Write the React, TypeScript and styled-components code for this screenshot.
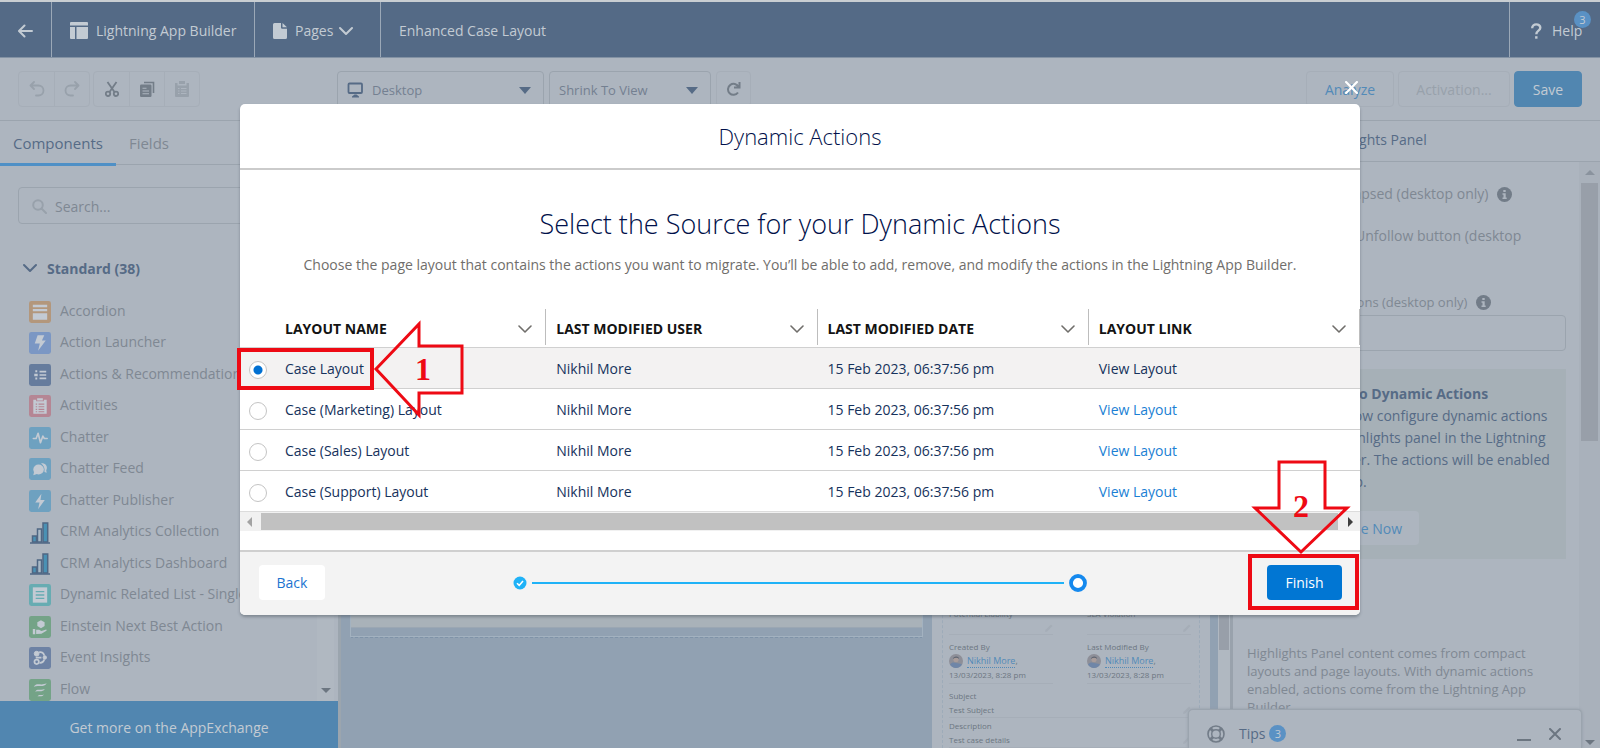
import React from 'react';
import styled, { createGlobalStyle } from 'styled-components';

const c = {
  bg: '#adb5bf',
  line: '#9ba4ae',
  faint: '#a6aeb8',
  navy: '#546a86',
  ink: '#566b86',
  text: '#7f8893',
  dim: '#98a1ab',
  pale: '#c3cbd3',
  blue: '#5186b0',
  link: '#528ab8',
  canvas: '#91a1b2',
  red: '#ee0a14',
};

const Global = createGlobalStyle`
  *, *::before, *::after { box-sizing: border-box; }
  body { margin: 0; background: ${c.bg}; }
  body, button, input, select { font-family: "Open Sans", "Noto Sans", sans-serif; font-size: 14px; }
  button { cursor: pointer; margin: 0; }
  svg { display: block; flex: none; }
  ul, h1, h2, h3, p, dl, dd { margin: 0; padding: 0; }
`;

const Page = styled.div`
  position: relative;
  display: flex;
  flex-direction: column;
  height: 100vh;
  overflow: hidden;
  background: ${c.bg};
  color: ${c.text};
  line-height: 20px;
`;

const TopBar = styled.header`
  display: flex;
  flex: none;
  height: 58px;
  border-top: 2px solid #c9ced2;
  border-bottom: 1px solid #8392a4;
  background: ${c.navy};
  color: ${c.pale};
`;

const BarCell = styled.div<{ $width?: number; $end?: boolean }>`
  position: relative;
  display: flex;
  align-items: center;
  gap: 8px;
  width: ${(p) => (p.$width ? `${p.$width}px` : 'auto')};
  padding: 2px 18px 0;
  border-right: ${(p) => (p.$width && !p.$end ? '1px solid #9ba8b7' : '0')};
  border-left: ${(p) => (p.$end ? '1px solid #9ba8b7' : '0')};
  margin-left: ${(p) => (p.$end ? 'auto' : '0')};
  white-space: nowrap;
`;

const BareButton = styled.button`
  display: flex;
  align-items: center;
  gap: 6px;
  padding: 0;
  border: 0;
  background: none;
  color: inherit;
`;

const Count = styled.span<{ $corner?: boolean }>`
  display: flex;
  align-items: center;
  justify-content: center;
  width: 17px;
  height: 17px;
  border-radius: 50%;
  background: #5a91c4;
  color: ${c.pale};
  font-size: 11px;
  line-height: 17px;
  ${(p) => p.$corner && 'position: absolute; right: 9px; top: 9px;'}
`;

const Toolbar = styled.div`
  display: flex;
  flex: none;
  align-items: flex-start;
  height: 63px;
  padding: 13px 18px 0;
  border-bottom: 1px solid ${c.line};
`;

const ButtonGroup = styled.div`
  display: flex;
  margin-right: 3px;
  border: 1px solid ${c.faint};
  border-radius: 4px;
`;

const IconButton = styled.button<{ $dim?: boolean; $framed?: boolean }>`
  display: flex;
  align-items: center;
  justify-content: center;
  width: 35px;
  height: ${(p) => (p.$framed ? 36 : 34)}px;
  padding: 0;
  border: ${(p) => (p.$framed ? `1px solid ${c.faint}` : '0')};
  border-radius: ${(p) => (p.$framed ? '4px' : '0')};
  background: none;
  color: ${(p) => (p.$dim ? c.dim : '#737d88')};
  & + & { border-left: 1px solid ${c.faint}; }
`;

const Pickers = styled.div`
  display: flex;
  gap: 5px;
  margin-left: 134px;
`;

const Picker = styled.label<{ $width: number }>`
  display: flex;
  align-items: center;
  gap: 8px;
  width: ${(p) => p.$width}px;
  height: 38px;
  padding: 0 12px 0 9px;
  border: 1px solid ${c.line};
  border-radius: 4px;
  color: ${c.ink};
`;

const PickerSelect = styled.select`
  flex: 1;
  min-width: 0;
  padding: 0;
  border: 0;
  appearance: none;
  background: none;
  color: #748091;
  font-size: 13px;
`;

const Actions = styled.div`
  display: flex;
  gap: 4px;
  margin-left: auto;
`;

const ActionButton = styled.button<{ $kind?: 'brand' | 'off'; $width: number }>`
  width: ${(p) => p.$width}px;
  height: 36px;
  padding: 1px 0 0;
  border: 1px solid ${(p) => (p.$kind === 'brand' ? c.blue : c.faint)};
  border-radius: 4px;
  background: ${(p) => (p.$kind === 'brand' ? c.blue : 'none')};
  color: ${(p) => (p.$kind === 'brand' ? c.pale : p.$kind === 'off' ? c.dim : c.link)};
`;

const Body = styled.div`
  display: flex;
  flex: 1;
  min-height: 0;
`;

const Sidebar = styled.aside`
  position: relative;
  display: flex;
  flex: none;
  flex-direction: column;
  width: 338px;
  overflow: hidden;
`;

const Tabs = styled.div`
  display: flex;
  flex: none;
  height: 44px;
  border-bottom: 1px solid ${c.line};
`;

const Tab = styled.button<{ $active?: boolean }>`
  height: 45px;
  padding: 1px 13px 0;
  border: 0;
  border-bottom: 3px solid ${(p) => (p.$active ? '#4f90c6' : 'transparent')};
  background: none;
  color: ${(p) => (p.$active ? c.ink : c.text)};
  font-size: 15px;
`;

const SearchBox = styled.label`
  display: flex;
  flex: none;
  align-items: center;
  gap: 8px;
  height: 37px;
  margin: 22px 18px 0;
  padding: 1px 13px 0;
  border: 1px solid ${c.line};
  border-radius: 4px;
`;

const SearchInput = styled.input`
  flex: 1;
  min-width: 0;
  padding: 0;
  border: 0;
  background: none;
  &::placeholder { color: ${c.text}; opacity: 1; }
`;

const SectionButton = styled.button`
  display: flex;
  align-items: center;
  gap: 10px;
  height: 20px;
  margin: 34px 0 18px;
  padding: 0 23px;
  border: 0;
  background: none;
  color: ${c.ink};
  font-weight: 700;
`;

const ComponentList = styled.ul`
  flex: 1;
  min-height: 0;
  margin-right: 20px;
  overflow: hidden;
  list-style: none;
`;

const ComponentItem = styled.li`
  display: flex;
  align-items: center;
  gap: 9px;
  height: 31px;
  padding-left: 29px;
  white-space: nowrap;
  &:nth-child(even) { height: 32px; }
`;

const ComponentName = styled.span`
  padding-bottom: 2px;
`;

const SidebarTrack = styled.div`
  position: absolute;
  right: 4px;
  top: 150px;
  bottom: 47px;
  display: flex;
  align-items: flex-end;
  justify-content: center;
  width: 17px;
  padding-bottom: 8px;
  background: #b0b8c1;
`;

const ExchangeLink = styled.a`
  display: flex;
  flex: none;
  align-items: center;
  justify-content: center;
  height: 47px;
  padding-top: 6px;
  background: ${c.blue};
  color: ${c.pale};
  text-decoration: none;
`;

const Canvas = styled.main`
  display: flex;
  flex: 1;
  min-width: 0;
  border-left: 3px solid #9ba5ae;
  background: ${c.canvas};
`;

const CanvasMain = styled.div`
  flex: 1;
  padding: 0 9px;
`;

const Dropzone = styled.div`
  height: 517px;
  border: 1px solid #a3b2c0;
  border-bottom: 1px dashed #7f93a8;
  box-shadow: inset 0 -1px 0 #a3b2c0;
`;

const Card = styled.div`
  height: 506px;
  border-bottom: 1px solid #9ba7b3;
  background: #a9b2b9;
`;

const RecordPane = styled.section`
  flex: none;
  width: 278px;
  padding: 0 10px;
  background: ${c.bg};
`;

const Record = styled.dl`
  display: grid;
  grid-template-columns: 104px 104px;
  column-gap: 34px;
  height: 100%;
  padding: 481px 0 0 6px;
  align-content: start;
  border: 1px dashed #9dabb9;
  border-width: 0 1px;
  color: #6c7681;
  font-size: 8px;
  line-height: 14px;
`;

const Field = styled.div<{ $wide?: boolean; $tight?: boolean; $height: number }>`
  grid-column: ${(p) => (p.$wide ? '1 / -1' : 'auto')};
  height: ${(p) => p.$height}px;
  padding-top: ${(p) => (p.$tight ? 1 : 5)}px;
  border-bottom: 1px solid ${c.faint};
  white-space: nowrap;
`;

const FieldValue = styled.dd`
  display: flex;
  align-items: center;
  justify-content: space-between;
  height: 14px;
`;

const Person = styled.dd`
  display: flex;
  align-items: center;
  gap: 4px;
  font-size: 9px;
`;

const PersonLink = styled.a`
  border-bottom: 1px dotted ${c.link};
  color: ${c.link};
  line-height: 11px;
  text-decoration: none;
`;

const CanvasTrack = styled.div`
  flex: none;
  width: 12px;
  margin-left: 8px;
  padding: 0 1px;
  background: #b0b8c1;
`;

const CanvasThumb = styled.div`
  height: 529px;
  background: #989fa9;
`;

const Inspector = styled.aside`
  display: flex;
  flex: none;
  flex-direction: column;
  width: 370px;
  border-left: 3px solid #99a2ac;
`;

const InspectorTitle = styled.h2`
  flex: none;
  height: 41px;
  padding: 9px 0 0 42px;
  border-bottom: 1px solid ${c.line};
  color: ${c.ink};
  font-size: 14px;
  font-weight: 400;
`;

const InspectorScroll = styled.div`
  display: flex;
  flex: 1;
  min-height: 0;
`;

const InspectorBody = styled.div`
  flex: 1;
  padding: 22px 14px 0;
  overflow: hidden;
  white-space: nowrap;
`;

const CheckRow = styled.label<{ $gap: number }>`
  display: flex;
  align-items: center;
  gap: 9px;
  margin-bottom: ${(p) => p.$gap}px;
  & input { width: 18px; height: 18px; margin: 0; }
`;

const FieldLabel = styled.label`
  display: flex;
  align-items: center;
  gap: 9px;
  height: 20px;
  margin: 46px 0 3px;
  font-size: 13px;
`;

const ActionCount = styled.input`
  display: block;
  width: 319px;
  height: 36px;
  border: 1px solid ${c.line};
  border-radius: 4px;
  background: none;
`;

const Notice = styled.section`
  width: 319px;
  height: 190px;
  margin-top: 18px;
  padding: 14px 0 0 43px;
  background: #a6b0b7;
  color: ${c.ink};
  line-height: 22px;
`;

const NoticeTitle = styled.h3`
  font-size: 14px;
  font-weight: 700;
`;

const UpgradeButton = styled.button`
  width: 129px;
  height: 34px;
  margin-top: 18px;
  padding: 0 17px 0 0;
  border: 0;
  border-radius: 4px;
  background: ${c.bg};
  color: ${c.link};
  text-align: right;
`;

const Hint = styled.p`
  margin-top: 85px;
  font-size: 13px;
  line-height: 18px;
`;

const InspectorTrack = styled.div`
  display: flex;
  flex-direction: column;
  align-items: center;
  flex: none;
  width: 21px;
  padding: 8px 2px 3px;
  background: #a9b1bb;
`;

const InspectorThumb = styled.div`
  width: 17px;
  height: 258px;
  margin: 8px 0 auto;
  background: #989fa9;
`;

const TipsDock = styled.section`
  position: absolute;
  right: 18px;
  bottom: 0;
  display: flex;
  align-items: center;
  width: 394px;
  height: 39px;
  padding: 9px 20px 0 18px;
  border: 1px solid ${c.line};
  border-bottom: 0;
  border-radius: 5px 5px 0 0;
  background: ${c.bg};
  box-shadow: 0 0 3px #8f99a4;
  color: ${c.ink};
`;

const TipsTitle = styled.h2`
  margin: 0 4px 0 14px;
  font-size: 14px;
  font-weight: 400;
`;

const DockButtons = styled.div`
  display: flex;
  gap: 18px;
  margin-left: auto;
  color: #6c7681;
`;

const Overlay = styled.div`
  position: absolute;
  inset: 0;
  display: flex;
  align-items: flex-start;
  justify-content: center;
  padding-top: 104px;
`;

const Dialog = styled.section`
  position: relative;
  width: 70%;
  border-radius: 5px;
  background: #fff;
  box-shadow: 0 2px 3px rgba(60, 70, 80, 0.4);
  color: #16325c;
`;

const CloseButton = styled.button`
  position: absolute;
  right: 2px;
  top: -23px;
  padding: 0;
  border: 0;
  background: none;
  color: #fff;
`;

const DialogHeader = styled.header`
  height: 66px;
  border-bottom: 2px solid #cbcbcb;
  text-align: center;
`;

const DialogTitle = styled.h1`
  color: #00104a;
  font-size: 22px;
  font-weight: 300;
  line-height: 64px;
`;

const Heading = styled.h2`
  padding-top: 36px;
  color: #00104a;
  font-size: 27px;
  font-weight: 300;
  line-height: 36px;
  text-align: center;
`;

const Lead = styled.p`
  padding: 12px 0 33px;
  color: #706e6b;
  line-height: 22px;
  text-align: center;
`;

const LayoutTable = styled.table`
  width: 100%;
  border-collapse: collapse;
  table-layout: fixed;
`;

const SelectHead = styled.th`
  width: 35px;
  padding: 0;
`;

const HeadCell = styled.th`
  height: 38px;
  padding: 2px 10px 0;
  background: linear-gradient(#bdbdbd, #bdbdbd) right top / 1px 36px no-repeat;
  color: #131313;
  font-size: 14px;
  font-weight: 700;
  text-align: left;
`;

const HeadInner = styled.div`
  display: flex;
  align-items: center;
  justify-content: space-between;
  padding-right: 4px;
  & svg { color: #706e6b; }
`;

const Row = styled.tr<{ $selected?: boolean }>`
  height: 41px;
  border-top: 1px solid #d0d0d0;
  background: ${(p) => (p.$selected ? '#f3f2f2' : '#fff')};
`;

const Cell = styled.td`
  padding: 2px 10px 0;
  line-height: 20px;
`;

const RadioCell = styled.td`
  padding: 5px 0 0 9px;
`;

const Radio = styled.input`
  display: block;
  width: 18px;
  height: 18px;
  margin: 0;
  border: 1px solid #c4c4c4;
  border-radius: 50%;
  appearance: none;
  background: #fff;
  &:checked { background: radial-gradient(circle, #0070d2 4px, #fff 5px); }
`;

const LayoutLink = styled.a<{ $plain?: boolean }>`
  color: ${(p) => (p.$plain ? '#16325c' : '#1b7fd4')};
  text-decoration: none;
`;

const ScrollRow = styled.div`
  display: flex;
  align-items: center;
  height: 20px;
  margin-bottom: 19px;
  padding: 0 7px;
  border-top: 1px solid #dcdcdc;
  background: #f1f1f1;
`;

const ScrollThumb = styled.div`
  flex: 1;
  height: 17px;
  margin: 0 10px 0 9px;
  background: #c1c1c1;
`;

const DialogFooter = styled.footer`
  display: flex;
  align-items: center;
  justify-content: space-between;
  height: 65px;
  padding: 0 18px 2px 19px;
  border-top: 2px solid #cfcfcf;
  border-radius: 0 0 5px 5px;
  background: #f3f3f3;
`;

const FooterButton = styled.button<{ $brand?: boolean }>`
  width: ${(p) => (p.$brand ? 75 : 66)}px;
  height: 35px;
  padding: 0;
  border: 0;
  border-radius: 4px;
  background: ${(p) => (p.$brand ? '#0176d3' : '#fff')};
  color: ${(p) => (p.$brand ? '#fff' : '#1b73d0')};
`;

const Progress = styled.div`
  display: flex;
  align-items: center;
  gap: 5px;
  width: 53%;
  margin-left: 8px;
`;

const ProgressLine = styled.div`
  flex: 1;
  height: 2px;
  background: #1fb2f7;
`;

const Callout = styled.svg<{ $side: 'left' | 'right' }>`
  position: absolute;
  pointer-events: none;
  ${(p) => (p.$side === 'left' ? 'left: -4px; top: 215px;' : 'right: 0; bottom: 0;')}
`;

const CalloutNumber = styled.text`
  fill: ${c.red};
  font-family: "Liberation Serif", serif;
  font-size: 32px;
  font-weight: 700;
`;

const Chevron = ({ size = 14, width = 2 }: { size?: number; width?: number }) => (
  <svg width={size} height={size} viewBox="0 0 14 14" fill="none" stroke="currentColor" strokeWidth={width} strokeLinecap="round" strokeLinejoin="round">
    <path d="M1 4l6 6 6-6" />
  </svg>
);

const Triangle = ({ dir = 'down', w = 10, color = 'currentColor' }: { dir?: 'down' | 'up' | 'left' | 'right'; w?: number; color?: string }) => {
  const long = w;
  const short = Math.ceil(w / 2) + (w > 10 ? 1 : 0);
  const flat = dir === 'down' || dir === 'up';
  const W = flat ? long : short;
  const H = flat ? short : long;
  const d = {
    down: `M0 0H${W}L${W / 2} ${H}z`,
    up: `M0 ${H}H${W}L${W / 2} 0z`,
    left: `M${W} 0V${H}L0 ${H / 2}z`,
    right: `M0 0V${H}L${W} ${H / 2}z`,
  }[dir];
  return <svg width={W} height={H} viewBox={`0 0 ${W} ${H}`}><path fill={color} d={d} /></svg>;
};

const Cross = ({ size }: { size: number }) => (
  <svg width={size} height={size} viewBox="0 0 12 12" stroke="currentColor" strokeWidth="2" strokeLinecap="round">
    <path d="M1 1l10 10M11 1L1 11" />
  </svg>
);

const Pencil = () => (
  <svg width="8" height="8" viewBox="0 0 8 8"><path fill="#a5adb7" d="M0 8l.6-2.200L6 .5l1.500 1.500L2.200 7.400z" /></svg>
);

const Info = () => (
  <svg width="15" height="15" viewBox="0 0 15 15">
    <circle cx="7.500" cy="7.500" r="7.500" fill="#727c88" />
    <path fill={c.bg} d="M6.300 3h2.400v2H6.300zM5.500 6.200h3.200v4.300h1V12H5.500v-1.500h1V7.700h-1z" />
  </svg>
);

const Avatar = () => (
  <svg width="14" height="14" viewBox="0 0 14 14">
    <circle cx="7" cy="7" r="7" fill="#8e8f98" />
    <path fill="#6f86a8" d="M1 10.500c2-2.500 4-2 6-1.500s4 0 6 1.500A7 7 0 0 1 1 10.500z" />
    <circle cx="7" cy="5.500" r="2.600" fill="#a99c9a" />
    <path fill="#5e6470" d="M4 5c0-3 6-3.500 6 0-1.500-1.600-4-1.600-6 0z" />
  </svg>
);

const g = '#c3cad3';

const glyphs: Record<string, [string, React.ReactNode]> = {
  accordion: ['#b3977c', <path key="g" fill={g} d="M4 4h15v2.500H4zM4 8.300h15v2.500H4zM4 12.800h15v6.700H4z" />],
  launcher: ['#7b97c4', <path key="g" fill={g} d="M9 3.500h7l-2.500 5.500h4L9.500 19.500l1.800-7.500H6z" />],
  actions: ['#667c9d', <path key="g" fill={g} d="M11 7h7v1.800h-7zM11 10.600h7v1.800h-7zM11 14.200h7V16h-7zM6.600 6.500h2v2h-2zM5.500 10.200h3.600v2.600H5.500zM6.600 14.200h2v2h-2z" />],
  activities: ['#b58694', <g key="g"><path fill={g} d="M4.500 5h3v1.500h8V5h3v14.500h-14zM8.500 3.500h6v2.200h-6z" /><path stroke="#b58694" strokeWidth="1.200" d="M7 9.500h1.500M10 9.500h6M7 12.300h1.500M10 12.300h6M7 15h1.500M10 15h6M7 17.500h1.500M10 17.500h6" /></g>],
  chatter: ['#6ea1c0', <path key="g" fill="none" stroke={g} strokeWidth="1.700" strokeLinejoin="round" strokeLinecap="round" d="M4.500 12h3l2-5.500 2.500 10 2.500-7 1.500 2.500h3" />],
  feed: ['#6ea1c0', <g key="g"><path fill={g} d="M12.500 5.500c4-.5 6.500 2 6.200 5-.2 1.500-.7 2.300-.7 2.300l.5 2.700-2.300-.8c.6-4-.8-7-3.700-9.200z" /><ellipse cx="10" cy="12" rx="5.500" ry="5.200" fill={g} /><path fill={g} d="M4.500 18l1-4.500 3.500 3z" /></g>],
  publisher: ['#6ea1c0', <path key="g" fill={g} d="M13 4L6.500 13H11l-1.500 7L16.500 10.500H12z" />],
  list: ['#67acb2', <g key="g"><path fill={g} d="M4 3.500h15v16H4z" /><path stroke="#67acb2" strokeWidth="1.500" d="M7 8h9M7 11.500h9M7 15h9" /></g>],
  einstein: ['#74a387', <g key="g" fill={g}><path d="M12.500 4.500l3.800 2v4l-3.800 2.200-3.800-2.200v-4z" /><path d="M4 13.500h2.500V19H4zM7.500 14.500h3l2.500 1.200 5-1.700c.8.500.5 1.200-.2 1.700L13 18.500l-5.500.3z" /></g>],
  insights: ['#6d82a4', <g key="g" fill="none" stroke={g}><circle cx="8" cy="7" r="2.500" fill={g} /><circle cx="16.500" cy="11" r="1.800" fill={g} /><circle cx="8" cy="15.500" r="2.300" strokeWidth="1.800" /><path strokeWidth="1.800" d="M10.500 5.500c3-.8 5 1 5.500 3.500M16 13c-.8 2.500-2.500 3.800-5 3.500M7 11h6" /></g>],
  flow: ['#74a387', <path key="g" fill={g} d="M5 8c3-5 7-.5 13.500-3.500C15.500 9.500 10 6 5 8zM6.500 13.200c2-3.800 5.500-.7 10-2.700-2 3.700-6 1.500-10 2.700zM9 18.200c1.500-2.700 3.500-.5 6.500-2-1.500 2.700-3.500 1.500-6.500 2z" />],
};

const ComponentIcon = ({ name }: { name: string }) => {
  if (name === 'chart') {
    return (
      <svg width="22" height="23" viewBox="0 0 22 23" stroke="#4f6784" strokeWidth="1.500">
        <path fill="#4a91b4" d="M3.500 21v-6h4v6z" />
        <path fill="#a9b9c6" d="M8.500 21V8h4v13z" />
        <path fill="#4a91b4" d="M14 21V2h4.700v19z" />
        <path d="M1 22h20" />
      </svg>
    );
  }
  const [fill, glyph] = glyphs[name];
  return (
    <svg width="22" height="22" viewBox="0 0 23 23">
      <rect width="23" height="23" rx="2.500" fill={fill} />
      {glyph}
    </svg>
  );
};

const components: [string, string][] = [
  ['accordion', 'Accordion'],
  ['launcher', 'Action Launcher'],
  ['actions', 'Actions & Recommendations'],
  ['activities', 'Activities'],
  ['chatter', 'Chatter'],
  ['feed', 'Chatter Feed'],
  ['publisher', 'Chatter Publisher'],
  ['chart', 'CRM Analytics Collection'],
  ['chart', 'CRM Analytics Dashboard'],
  ['list', 'Dynamic Related List - Single'],
  ['einstein', 'Einstein Next Best Action'],
  ['insights', 'Event Insights'],
  ['flow', 'Flow'],
];

const layouts = ['Case Layout', 'Case (Marketing) Layout', 'Case (Sales) Layout', 'Case (Support) Layout'];
const columns = ['LAYOUT NAME', 'LAST MODIFIED USER', 'LAST MODIFIED DATE', 'LAYOUT LINK'];

export default function App() {
  const [selected, setSelected] = React.useState(0);
  return (
    <Page>
      <Global />
      <TopBar>
        <BarCell $width={52}>
          <BareButton aria-label="Back to setup">
            <svg width="15" height="14" viewBox="0 0 15 14" fill="none" stroke="currentColor" strokeWidth="2" strokeLinecap="round" strokeLinejoin="round"><path d="M14 7H1.500M6.500 1.500L1 7l5.500 5.500" /></svg>
          </BareButton>
        </BarCell>
        <BarCell $width={203}>
          <svg width="18" height="17" viewBox="0 0 18 17" fill="currentColor"><path d="M1 0h16a1 1 0 0 1 1 1v2.500H0V1a1 1 0 0 1 1-1zM0 5h5v12H1a1 1 0 0 1-1-1zM6.500 5H18v11a1 1 0 0 1-1 1H6.500z" /></svg>
          Lightning App Builder
        </BarCell>
        <BarCell $width={126}>
          <svg width="14" height="16" viewBox="0 0 14 16" fill="currentColor"><path d="M1.500 0H8v4.500A1.200 1.200 0 0 0 9.200 5.700H14v8.800a1.500 1.500 0 0 1-1.500 1.500h-11A1.500 1.500 0 0 1 0 14.500v-13A1.500 1.500 0 0 1 1.500 0zM9.500 0L14 4.300H9.500z" /></svg>
          <BareButton>Pages <Chevron /></BareButton>
        </BarCell>
        <BarCell>Enhanced Case Layout</BarCell>
        <BarCell $width={91} $end>
          <svg width="16" height="16" viewBox="0 0 16 16" fill="none" stroke="currentColor" strokeWidth="2.400"><path d="M4.200 5.200C4 0 12.500.3 12.300 4.800 12.200 7.800 8.300 7.500 8.300 11.300" /><path d="M8.300 13.200v2.500" /></svg>
          Help
          <Count $corner>3</Count>
        </BarCell>
      </TopBar>

      <Toolbar>
        <ButtonGroup>
          <IconButton $dim aria-label="Undo">
            <svg width="16" height="16" viewBox="0 0 16 16" fill="none" stroke="currentColor" strokeWidth="1.800" strokeLinecap="round" strokeLinejoin="round"><path d="M5 1L1.500 4.500 5 8M2 4.500h7.500a5 5 0 0 1 0 10H7" /></svg>
          </IconButton>
          <IconButton $dim aria-label="Redo">
            <svg width="16" height="16" viewBox="0 0 16 16" fill="none" stroke="currentColor" strokeWidth="1.800" strokeLinecap="round" strokeLinejoin="round"><path d="M11 1l3.500 3.500L11 8M14 4.500H6.500a5 5 0 0 0 0 10H9" /></svg>
          </IconButton>
        </ButtonGroup>
        <ButtonGroup>
          <IconButton aria-label="Cut">
            <svg width="14" height="16" viewBox="0 0 14 16" fill="none" stroke="currentColor" strokeWidth="1.800"><circle cx="3" cy="12.800" r="2.200" /><circle cx="11" cy="12.800" r="2.200" /><path d="M2.500 1l7 10M11.500 1l-7 10" /></svg>
          </IconButton>
          <IconButton aria-label="Copy">
            <svg width="15" height="16" viewBox="0 0 15 16"><path fill="none" stroke="currentColor" strokeWidth="1.600" d="M4 1.500h9.500V12" /><rect y="3.500" width="11.500" height="12.500" rx="1.200" fill="currentColor" /><path stroke={c.bg} strokeWidth="1.100" d="M2.500 7.200h4M2.500 10h6.500M2.500 12.800h6.500" /></svg>
          </IconButton>
          <IconButton $dim aria-label="Paste">
            <svg width="14" height="16" viewBox="0 0 14 16"><path fill="currentColor" d="M0 2h2.500v2.500h9V2H14v13a1 1 0 0 1-1 1H1a1 1 0 0 1-1-1zM4 0h6v3H4z" /><path stroke={c.bg} d="M3 7.500h1.500M6 7.500h5.500M3 10h1.500M6 10h5.500M3 12.500h1.500M6 12.500h5.500" /></svg>
          </IconButton>
        </ButtonGroup>
        <Pickers>
          <Picker $width={207}>
            <svg width="17" height="16" viewBox="0 0 17 16"><rect x="1.500" y="1.500" width="13.500" height="9.500" rx="1" fill="none" stroke="currentColor" strokeWidth="1.800" /><path fill="currentColor" d="M5 15.500h7v-1L9.500 12.500h-2L5 14.500z" /></svg>
            <PickerSelect aria-label="Form factor"><option>Desktop</option></PickerSelect>
            <Triangle w={12} />
          </Picker>
          <Picker $width={162}>
            <PickerSelect aria-label="Zoom"><option>Shrink To View</option></PickerSelect>
            <Triangle w={12} />
          </Picker>
          <IconButton $framed aria-label="Refresh">
            <svg width="15" height="14" viewBox="0 0 15 14" fill="none" stroke="currentColor" strokeWidth="2"><path d="M12 10.500A5.500 5.500 0 1 1 12.500 5M13.500 0v5.500H8" /></svg>
          </IconButton>
        </Pickers>
        <Actions>
          <ActionButton $width={88}>Analyze</ActionButton>
          <ActionButton $width={112} $kind="off">Activation...</ActionButton>
          <ActionButton $width={68} $kind="brand">Save</ActionButton>
        </Actions>
      </Toolbar>

      <Body>
        <Sidebar>
          <Tabs>
            <Tab $active>Components</Tab>
            <Tab>Fields</Tab>
          </Tabs>
          <SearchBox>
            <svg width="15" height="15" viewBox="0 0 15 15" fill="none" stroke={c.dim} strokeWidth="2"><circle cx="6" cy="6" r="4.800" /><path d="M9.500 9.500L14 14" strokeLinecap="round" /></svg>
            <SearchInput type="text" placeholder="Search..." aria-label="Search components" />
          </SearchBox>
          <SectionButton><Chevron />Standard (38)</SectionButton>
          <ComponentList>
            {components.map(([icon, label]) => (
              <ComponentItem key={label}><ComponentIcon name={icon} /><ComponentName>{label}</ComponentName></ComponentItem>
            ))}
          </ComponentList>
          <SidebarTrack><Triangle color="#6c7681" /></SidebarTrack>
          <ExchangeLink href="#appexchange">Get more on the AppExchange</ExchangeLink>
        </Sidebar>

        <Canvas>
          <CanvasMain><Dropzone><Card /></Dropzone></CanvasMain>
          <RecordPane>
            <Record>
              <Field $height={33}><dt>Potential Liability</dt><FieldValue><span /><Pencil /></FieldValue></Field>
              <Field $height={33}><dt>SLA Violation</dt><FieldValue><span /><Pencil /></FieldValue></Field>
              <Field $height={49}>
                <dt>Created By</dt>
                <Person><Avatar /><span><PersonLink href="#user">Nikhil More</PersonLink>,</span></Person>
                <dd>13/03/2023, 8:28 pm</dd>
              </Field>
              <Field $height={49}>
                <dt>Last Modified By</dt>
                <Person><Avatar /><span><PersonLink href="#user">Nikhil More</PersonLink>,</span></Person>
                <dd>13/03/2023, 8:28 pm</dd>
              </Field>
              <Field $wide $height={34}><dt>Subject</dt><FieldValue>Test Subject<Pencil /></FieldValue></Field>
              <Field $wide $tight $height={30}><dt>Description</dt><FieldValue>Test case details<Pencil /></FieldValue></Field>
            </Record>
          </RecordPane>
          <CanvasTrack><CanvasThumb /></CanvasTrack>
        </Canvas>

        <Inspector>
          <InspectorTitle>Page &gt; Highlights Panel</InspectorTitle>
          <InspectorScroll>
            <InspectorBody>
              <CheckRow $gap={22}><input type="checkbox" />Show as collapsed (desktop only) <Info /></CheckRow>
              <CheckRow $gap={0}><input type="checkbox" />Hide Follow/Unfollow button (desktop</CheckRow>
              <FieldLabel htmlFor="visible-actions">Visible Action Buttons (desktop only) <Info /></FieldLabel>
              <ActionCount id="visible-actions" type="text" />
              <Notice>
                <NoticeTitle>Upgrade to Dynamic Actions</NoticeTitle>
                <p>You can now configure dynamic actions<br />for the highlights panel in the Lightning<br />App Builder. The actions will be enabled<br />on desktop.</p>
                <UpgradeButton>Upgrade Now</UpgradeButton>
              </Notice>
              <Hint>Highlights Panel content comes from compact<br />layouts and page layouts. With dynamic actions<br />enabled, actions come from the Lightning App<br />Builder.</Hint>
            </InspectorBody>
            <InspectorTrack>
              <Triangle dir="up" color="#8a939e" />
              <InspectorThumb />
              <Triangle color="#6c7681" />
            </InspectorTrack>
          </InspectorScroll>
        </Inspector>
      </Body>

      <TipsDock>
        <svg width="18" height="18" viewBox="0 0 18 18" fill="none" stroke="#727c88"><circle cx="9" cy="9" r="8" strokeWidth="1.600" /><circle cx="9" cy="9" r="4.300" strokeWidth="1.400" /><path strokeWidth="3" d="M3.300 3.300l2.700 2.700M14.700 3.300L12 6M3.300 14.700L6 12M14.700 14.700L12 12" /></svg>
        <TipsTitle>Tips</TipsTitle>
        <Count>3</Count>
        <DockButtons>
          <BareButton aria-label="Minimize tips"><svg width="14" height="14" viewBox="0 0 14 14" stroke="currentColor" strokeWidth="2"><path d="M0 13h14" /></svg></BareButton>
          <BareButton aria-label="Close tips"><Cross size={12} /></BareButton>
        </DockButtons>
      </TipsDock>

      <Overlay>
        <Dialog role="dialog" aria-labelledby="dialog-title">
          <CloseButton aria-label="Close"><Cross size={13} /></CloseButton>
          <DialogHeader><DialogTitle id="dialog-title">Dynamic Actions</DialogTitle></DialogHeader>
          <Heading>Select the Source for your Dynamic Actions</Heading>
          <Lead>Choose the page layout that contains the actions you want to migrate. You’ll be able to add, remove, and modify the actions in the Lightning App Builder.</Lead>
          <LayoutTable>
            <thead>
              <tr>
                <SelectHead aria-label="Select" />
                {columns.map((name) => (
                  <HeadCell key={name}><HeadInner>{name}<Chevron width={1.6} /></HeadInner></HeadCell>
                ))}
              </tr>
            </thead>
            <tbody>
              {layouts.map((name, i) => (
                <Row key={name} $selected={i === selected}>
                  <RadioCell><Radio type="radio" name="layout" aria-label={name} checked={i === selected} onChange={() => setSelected(i)} /></RadioCell>
                  <Cell>{name}</Cell>
                  <Cell>Nikhil More</Cell>
                  <Cell>15 Feb 2023, 06:37:56 pm</Cell>
                  <Cell><LayoutLink href="#layout" $plain={i === selected}>View Layout</LayoutLink></Cell>
                </Row>
              ))}
            </tbody>
          </LayoutTable>
          <ScrollRow>
            <Triangle dir="left" color="#a3a3a3" />
            <ScrollThumb />
            <Triangle dir="right" color="#404040" />
          </ScrollRow>
          <DialogFooter>
            <FooterButton>Back</FooterButton>
            <Progress>
              <svg width="14" height="14" viewBox="0 0 14 14"><circle cx="7" cy="7" r="6.500" fill="#1fb2f7" /><path fill="none" stroke="#fff" strokeWidth="1.600" d="M4 7.200l2.200 2.200L10 5" /></svg>
              <ProgressLine />
              <svg width="18" height="18" viewBox="0 0 18 18"><circle cx="9" cy="9" r="7" fill="#fff" stroke="#1589ee" strokeWidth="3.800" /></svg>
            </Progress>
            <FooterButton $brand>Finish</FooterButton>
          </DialogFooter>
          <Callout $side="left" width="230" height="100" viewBox="0 0 230 100" fill="none" stroke={c.red} strokeWidth="4" aria-hidden="true">
            <path d="M3 31h133v38H3z" />
            <path d="M140 50l43-45v22h43v47h-43v22z" strokeWidth="3" />
            <CalloutNumber x="179" y="61" stroke="none">1</CalloutNumber>
          </Callout>
          <Callout $side="right" width="114" height="158" viewBox="0 0 114 158" fill="none" stroke={c.red} strokeWidth="4" aria-hidden="true">
            <path d="M4 99h107v52H4z" />
            <path d="M33 5h46v46h22l-46 44L9 51h24z" strokeWidth="3" />
            <CalloutNumber x="47" y="60" stroke="none">2</CalloutNumber>
          </Callout>
        </Dialog>
      </Overlay>
    </Page>
  );
}
